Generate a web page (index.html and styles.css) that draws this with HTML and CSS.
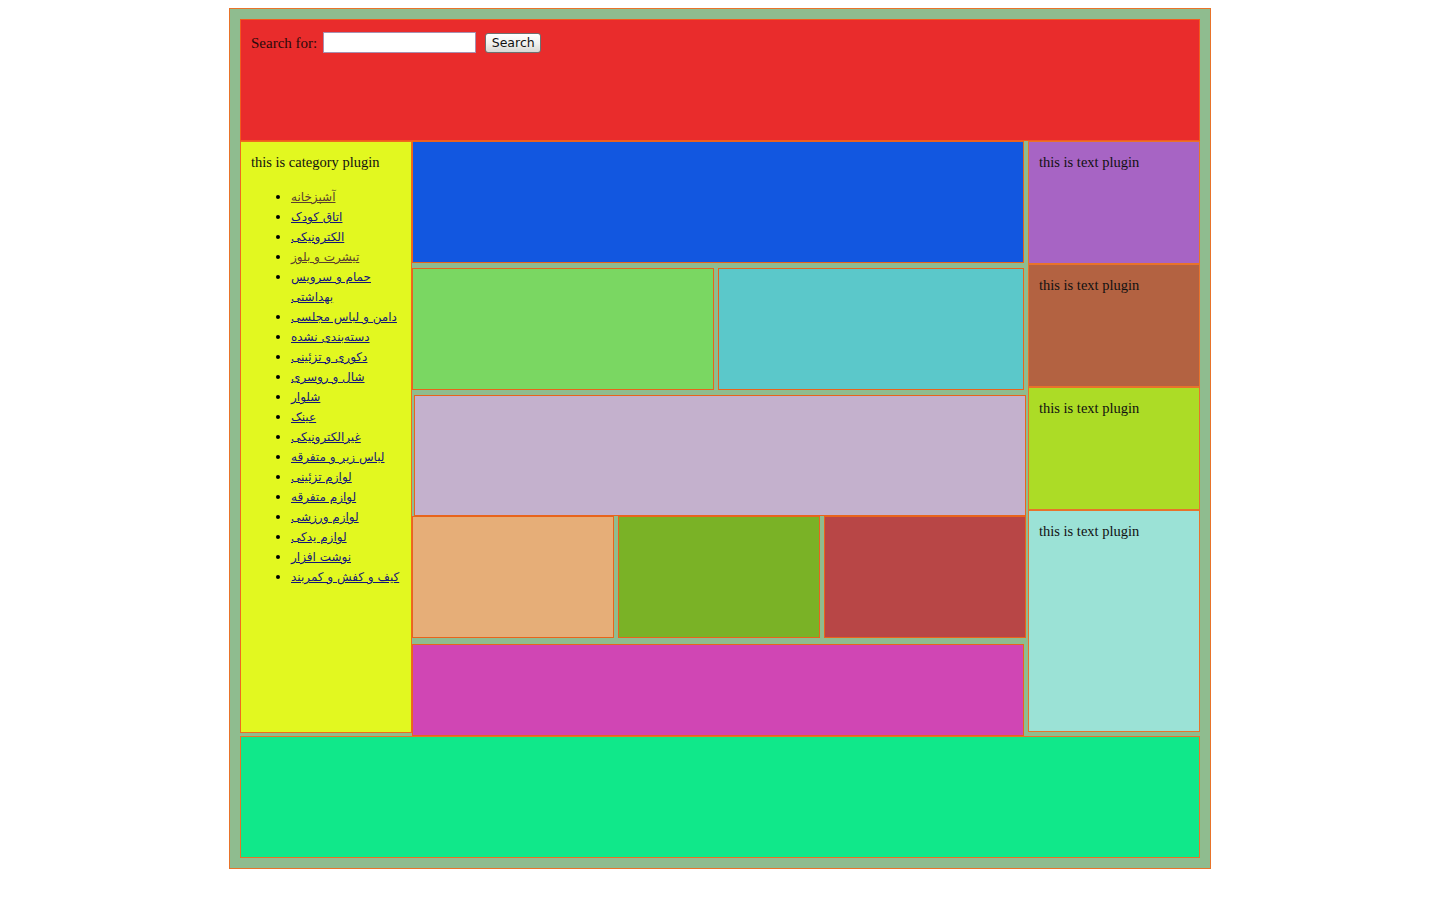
FILE: index.html
```html
<!DOCTYPE html>
<html lang="en">
<head>
<meta charset="utf-8">
<title>Layout</title>
<link rel="stylesheet" href="styles.css">
</head>
<body>
<div class="page">
  <div class="header">
    <form class="search">
      <label class="search-label" for="q">Search for:</label>
      <input class="search-input" id="q" type="text">
      <button class="search-btn" type="button">Search</button>
    </form>
  </div>
  <div class="main">
    <div class="left">
      <p class="plugin-title">this is category plugin</p>
      <ul class="cats">
        <li><a class="visited" href="#">آشپزخانه</a></li>
        <li><a href="#">اتاق کودک</a></li>
        <li><a href="#">الکترونیکی</a></li>
        <li><a class="visited" href="#">تیشرت و بلوز</a></li>
        <li><a href="#">حمام و سرویس<br>بهداشتی</a></li>
        <li><a href="#">دامن و لباس مجلسی</a></li>
        <li><a href="#">دسته‌بندی نشده</a></li>
        <li><a href="#">دکوری و تزئینی</a></li>
        <li><a href="#">شال و روسری</a></li>
        <li><a href="#">شلوار</a></li>
        <li><a href="#">عینک</a></li>
        <li><a href="#">غیرالکترونیکی</a></li>
        <li><a href="#">لباس زیر و متفرقه</a></li>
        <li><a href="#">لوازم تزئینی</a></li>
        <li><a href="#">لوازم متفرقه</a></li>
        <li><a href="#">لوازم ورزشی</a></li>
        <li><a href="#">لوازم یدکی</a></li>
        <li><a href="#">نوشت افزار</a></li>
        <li><a href="#">کیف و کفش و کمربند</a></li>
      </ul>
    </div>
    <div class="center">
      <div class="box blue"></div>
      <div class="row two">
        <div class="box green"></div>
        <div class="box cyan"></div>
      </div>
      <div class="box lavender"></div>
      <div class="row three">
        <div class="box peach"></div>
        <div class="box olive"></div>
        <div class="box brick"></div>
      </div>
      <div class="box magenta"></div>
    </div>
    <div class="right">
      <div class="tbox purple"><p class="plugin-title">this is text plugin</p></div>
      <div class="tbox brown"><p class="plugin-title">this is text plugin</p></div>
      <div class="tbox lime"><p class="plugin-title">this is text plugin</p></div>
      <div class="tbox aqua tall"><p class="plugin-title">this is text plugin</p></div>
    </div>
  </div>
  <div class="footer"></div>
</div>
</body>
</html>
```
FILE: styles.css
```css
* { box-sizing: border-box; }

body {
  margin: 8px;
  font-family: "Liberation Serif", "Times New Roman", serif;
  font-size: 14.5px;
  color: #111;
  background: #fff;
}

.page {
  width: 982px;
  margin: 0 auto;
  padding: 10px;
  background: #8fbc8f;
  border: 1px solid #e8732a;
}

.header {
  height: 122px;
  background: #e92c2c;
  border: 1px solid #f4591e;
  padding: 10px;
}

.search {
  display: flex;
  align-items: center;
  margin: 0;
  padding-top: 2px;
}

.search-label {
  font-size: 15px;
  color: #2a0a0a;
  padding-top: 1px;
}

.search-input {
  width: 153px;
  height: 21px;
  margin-left: 6px;
  border: 1px solid #a890b0;
  background: #fff;
  padding: 1px 2px;
}

.search-btn {
  width: 56px;
  height: 20px;
  margin-left: 9px;
  padding: 0;
  font-family: "DejaVu Sans", sans-serif;
  font-size: 12.5px;
  color: #111;
  border: 1px solid #6f6f6f;
  border-radius: 3px;
  background: linear-gradient(#ffffff, #f2f2f0 50%, #d8d8d4);
}

.main {
  display: flex;
  align-items: flex-start;
  height: 595px;
}

.left {
  width: 172px;
  height: 592px;
  background: #e2f820;
  border: 1px solid #f06a1e;
  padding: 10px;
}

.plugin-title {
  margin: 0;
  line-height: 20px;
}

.cats {
  margin: 15px 0 0;
  padding-left: 40px;
  font-family: "DejaVu Sans", sans-serif;
  font-size: 12px;
}

.cats li {
  line-height: 20px;
  white-space: nowrap;
}

.cats li::marker {
  color: #000;
  font-size: 13px;
}

.cats a {
  color: #15157a;
  text-decoration: underline;
}

.cats a.visited {
  color: #5a4030;
}

.center {
  width: 612px;
}

.box {
  border: 1px solid #e8641c;
  height: 122px;
}

.row {
  display: flex;
  gap: 4px;
}

.row .box { flex: none; }

.blue { background: #1257e0; margin-bottom: 5px; }

.two { margin-bottom: 5px; }
.green { width: 302px; background: #7ad762; }
.cyan { width: 306px; background: #5bc8ca; }

.lavender {
  width: 612px;
  height: 121px;
  margin-left: 2px;
  background: #c4b1cd;
}

.three { margin-bottom: 6px; }
.peach { width: 202px; background: #e6ae78; }
.olive { width: 202px; background: #7ab226; }
.brick { width: 202px; background: #b84646; }

.magenta { height: 92px; background: #d046b4; }

.right {
  width: 172px;
  margin-left: 4px;
}

.tbox {
  height: 123px;
  border: 1px solid #e8732a;
  padding: 10px;
}

.purple { background: #a764c4; }
.brown { background: #b36241; }
.lime { background: #acdc26; }
.aqua { background: #9be2d6; }
.tall { height: 222px; }

.footer {
  height: 122px;
  background: #10e88a;
  border: 1px solid #e8732a;
}
```
